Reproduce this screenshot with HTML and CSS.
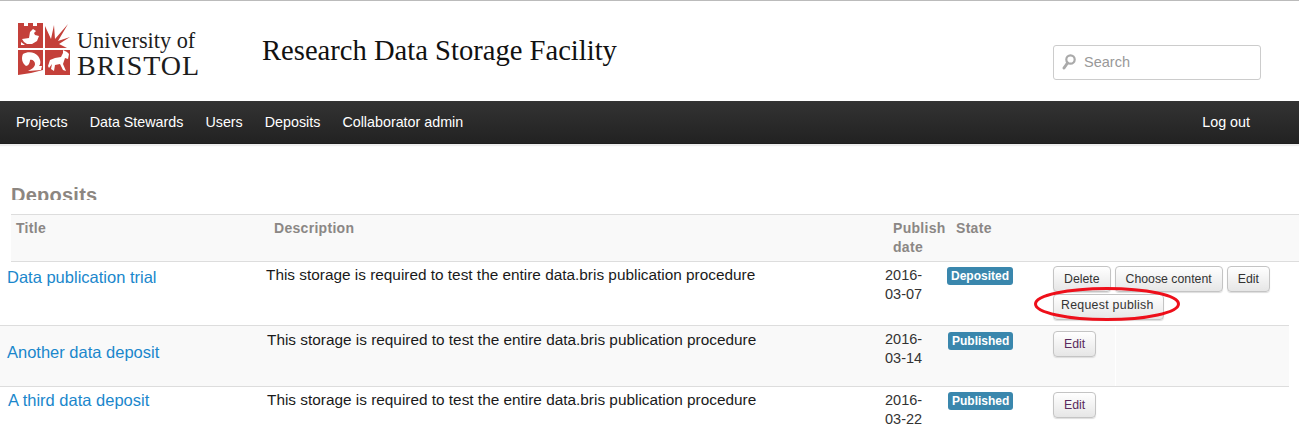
FILE: index.html
```html
<!DOCTYPE html>
<html lang="en">
<head>
<meta charset="utf-8">
<title>Research Data Storage Facility</title>
<link rel="stylesheet" href="styles.css">
</head>
<body>
<header class="site-header">
  <div class="logo">
    <svg class="crest" viewBox="0 0 52 52" width="52" height="52" aria-hidden="true">
      <path fill="#c4403a" d="M0 0h6v3h4V0h5v3h4V0h6v25H0z"/>
      <path fill="#c4403a" d="M0 27h25v20l-12 3-13 2z"/>
      <path fill="#c4403a" d="M27 27h25v25H27z"/>
      <path fill="#c4403a" d="M27 25V3l6 13 3-14 1 14L50 1 40 18l12-4-11 7 8 4z"/>
      <path fill="#fff" d="M4 16l7-1 1-6 3-3 3 2-2 2 1 2 4 1-2 5-5 3H9l-3-2zM3 19l4 3H3z"/>
      <path fill="#fff" d="M5 31c5-3 12-2 15 2 3 4 3 8 1 10h3l-1 4-13 1c4-2 7-4 7-7 0-3-3-5-5-4 0 3-2 6-4 6-4-3-5-8-3-12z"/>
      <path fill="#fff" d="M30 43l2-6 5-2 6-1 2-4 0-3 4 2 2 2-1 5-3-1-2 6 3 7-3-1-3-6-5 1-1 6-3-2 1-5-3 4z"/>
    </svg>
    <div class="wordmark">
      <span class="word-top">University of</span>
      <span class="word-bottom">BRISTOL</span>
    </div>
  </div>
  <h1 class="site-title">Research Data Storage Facility</h1>
  <div class="search">
    <svg class="search-icon" viewBox="0 0 14 16" width="14" height="16" aria-hidden="true">
      <circle cx="8.5" cy="5.5" r="4.2" fill="none" stroke="#aaa" stroke-width="2.2"/>
      <path d="M5.5 9L2 14" stroke="#aaa" stroke-width="3" stroke-linecap="round"/>
    </svg>
    <input class="search-input" type="text" placeholder="Search">
  </div>
</header>

<nav class="navbar">
  <a href="#">Projects</a>
  <a href="#">Data Stewards</a>
  <a href="#">Users</a>
  <a href="#">Deposits</a>
  <a href="#">Collaborator admin</a>
  <a href="#" class="logout">Log out</a>
</nav>

<main class="content">
  <div class="heading-clip"><h2>Deposits</h2></div>
  <div class="table-head">
    <div>Title</div>
    <div>Description</div>
    <div>Publish date</div>
    <div>State</div>
  </div>

  <div class="row row-one">
    <a class="title" href="#">Data publication trial</a>
    <div class="desc">This storage is required to test the entire data.bris publication procedure</div>
    <div class="date">2016-03-07</div>
    <div class="state"><span class="badge">Deposited</span></div>
    <div class="actions">
      <a class="btn" href="#">Delete</a>
      <a class="btn" href="#">Choose content</a>
      <a class="btn" href="#">Edit</a>
      <span class="request-wrap">
        <a class="btn" href="#">Request publish</a>
        <svg class="ring" viewBox="0 0 148 36" width="148" height="36" aria-hidden="true">
          <ellipse cx="74" cy="18" rx="71.5" ry="15.5" fill="none" stroke="#ee0f1a" stroke-width="3"/>
        </svg>
      </span>
    </div>
  </div>

  <div class="row row-two">
    <a class="title" href="#">Another data deposit</a>
    <div class="desc">This storage is required to test the entire data.bris publication procedure</div>
    <div class="date">2016-03-14</div>
    <div class="state"><span class="badge">Published</span></div>
    <div class="actions"><a class="btn visited" href="#">Edit</a></div>
  </div>

  <div class="row row-three">
    <a class="title" href="#">A third data deposit</a>
    <div class="desc">This storage is required to test the entire data.bris publication procedure</div>
    <div class="date">2016-03-22</div>
    <div class="state"><span class="badge">Published</span></div>
    <div class="actions"><a class="btn visited" href="#">Edit</a></div>
  </div>
</main>
</body>
</html>
```
FILE: styles.css
```css
* { box-sizing: border-box; }
html, body { margin: 0; padding: 0; height: 444px; overflow: hidden; background: #fff; }
body { font-family: "Liberation Sans", Arial, sans-serif; font-size: 14px; color: #222; border-top: 1px solid #bbb; }

.site-header { display: flex; align-items: flex-start; height: 100px; }
.logo { display: flex; align-items: flex-start; margin: 22px 0 0 18px; width: 244px; }
.crest { flex: none; }
.wordmark { display: flex; flex-direction: column; margin-left: 7px; font-family: "Liberation Serif", serif; color: #1c1c1c; }
.word-top { font-size: 22.3px; line-height: 24px; margin-top: 6px; white-space: nowrap; }
.word-bottom { font-size: 28px; line-height: 24px; letter-spacing: 1px; margin-top: 1px; white-space: nowrap; }
.site-title { margin: 32px 0 0; font-family: "Liberation Serif", serif; font-weight: normal; font-size: 28.6px; line-height: 36px; color: #111; white-space: nowrap; }
.search { display: flex; align-items: center; width: 208px; height: 35px; margin: 44px 38px 0 auto; border: 1px solid #ccc; border-radius: 3px; padding: 0 0 2px 8px; background: #fff; }
.search-icon { flex: none; }
.search-input { border: 0; outline: 0; padding: 0; margin-left: 8px; width: 160px; font: 14.5px "Liberation Sans", Arial, sans-serif; color: #555; background: transparent; }
.search-input::placeholder { color: #999; opacity: 1; }

.navbar { display: flex; align-items: center; height: 43px; padding-left: 16px; gap: 22px; background: linear-gradient(#333, #222); border-bottom: 1px solid #1e1e1e; box-shadow: 0 2px 1px #eee; }
.navbar a { color: #fff; text-decoration: none; font-size: 14.3px; }
.navbar .logout { margin-left: auto; margin-right: 49px; }

.content { padding-top: 39px; }
.heading-clip { height: 17px; padding-left: 11px; overflow: hidden; margin-bottom: 14px; }
.heading-clip h2 { margin: 0; font-size: 20px; line-height: 24px; font-weight: bold; color: #8c8681; letter-spacing: 0.25px; }

.table-head { display: grid; grid-template-columns: 258px 619px 63px 1fr; margin-left: 11px; height: 48px; padding: 4px 0 0 5px; background: #f9f9f9; border-top: 1px solid #ddd; border-bottom: 1px solid #ddd; font-weight: bold; font-size: 14px; line-height: 19px; letter-spacing: 0.3px; color: #8b8785; }

.row { display: grid; grid-template-columns: 266px 619px 62px 106px 1fr; width: 1289px; border-bottom: 1px solid #ddd; font-size: 14px; line-height: 19px; }
.row-one { height: 64px; }
.row-two { height: 61px; background: #f9f9f9; }
.row-three { border-bottom: 0; height: 57px; }

.title { color: #1a87cc; font-size: 16.5px; line-height: 22px; text-decoration: none; padding-left: 7px; white-space: nowrap; }
.desc { color: #1a1a1a; font-size: 15.37px; line-height: 19px; white-space: nowrap; }
.date { color: #333; width: 45px; padding-top: 4px; font-size: 14.5px; }
.badge { display: inline-block; background: #3a87ad; color: #fff; font-weight: bold; font-size: 12px; line-height: 18px; padding: 0 4px; border-radius: 3px; vertical-align: top; }
.actions { display: flex; flex-wrap: wrap; align-content: flex-start; gap: 2px 4px; }
.btn { display: inline-block; height: 26px; padding: 0 10px; border: 1px solid #c4c4c4; border-radius: 4px; background: linear-gradient(#fff, #e6e6e6); color: #333; font-size: 12.3px; line-height: 24px; text-decoration: none; white-space: nowrap; box-shadow: 0 1px 1px #ddd; }
.btn.visited { color: #5a2a5e; }
.request-wrap { position: relative; display: block; }
.request-wrap .btn { padding: 0 9px 0 7px; letter-spacing: 0.3px; line-height: 21px; }
.ring { position: absolute; left: -20px; top: -8px; }

.row-one .title { padding-top: 4px; }
.row-one .desc { padding-top: 3px; }
.row-one .state { padding-top: 5px; }
.row-one .actions { padding-top: 4px; }

.row-two .title { padding-top: 15px; }
.row-two .desc { padding: 4px 0 0 1px; }
.row-two .state { padding: 6px 0 0 1px; }
.row-two .actions { padding-top: 5px; width: 63px; border-right: 1px solid #fff; }

.row-three .title { padding: 2px 0 0 8px; }
.row-three .desc { padding: 3px 0 0 1px; }
.row-three .state { padding: 5px 0 0 1px; }
.row-three .actions { padding-top: 5px; }
```
